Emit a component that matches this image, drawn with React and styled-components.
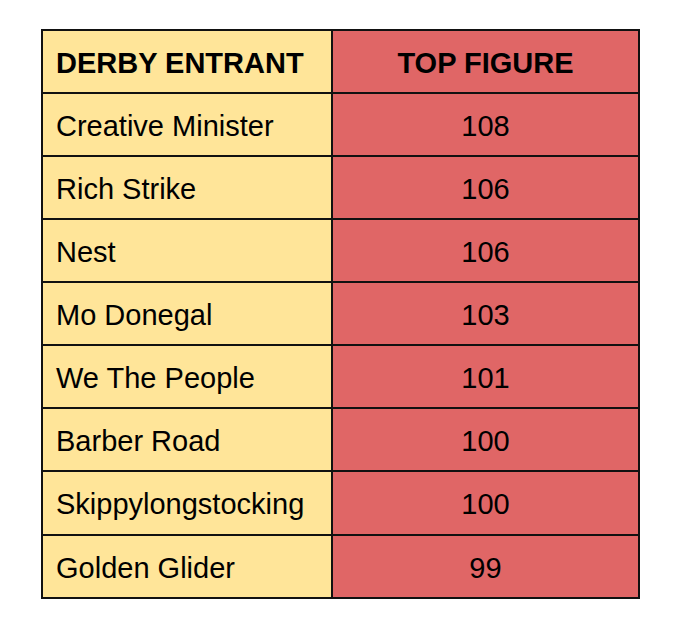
import { Fragment } from 'react'
import styled, { createGlobalStyle } from 'styled-components'

const GlobalStyle = createGlobalStyle`
  html, body {
    margin: 0;
    padding: 0;
    background: #fff;
  }
`

const rows = [
  ['Creative Minister', '108'],
  ['Rich Strike', '106'],
  ['Nest', '106'],
  ['Mo Donegal', '103'],
  ['We The People', '101'],
  ['Barber Road', '100'],
  ['Skippylongstocking', '100'],
  ['Golden Glider', '99'],
]

const Page = styled.div`
  padding: 29px 0 0 41px;
`

const Grid = styled.div`
  display: inline-grid;
  grid-template-columns: 288px 305px;
  grid-template-rows: repeat(7, 61px) 62px 61px;
  gap: 2px;
  padding: 2px;
  background: #111;
`

const Cell = styled.div`
  display: flex;
  align-items: center;
  justify-content: ${({ $center }) => ($center ? 'center' : 'flex-start')};
  padding: 3px 0 0 ${({ $center }) => ($center ? '0' : '13px')};
  background: ${({ $red }) => ($red ? '#e06666' : '#ffe599')};
  color: #000;
  font-family: 'Liberation Sans', Arial, sans-serif;
  font-size: 29px;
  font-weight: ${({ $bold }) => ($bold ? 700 : 400)};
  white-space: nowrap;
`

export default function App() {
  return (
    <>
      <GlobalStyle />
      <Page>
        <Grid>
          <Cell $bold>DERBY ENTRANT</Cell>
          <Cell $bold $red $center>TOP FIGURE</Cell>
          {rows.map(([name, fig]) => (
            <Fragment key={name}>
              <Cell>{name}</Cell>
              <Cell $red $center>{fig}</Cell>
            </Fragment>
          ))}
        </Grid>
      </Page>
    </>
  )
}
